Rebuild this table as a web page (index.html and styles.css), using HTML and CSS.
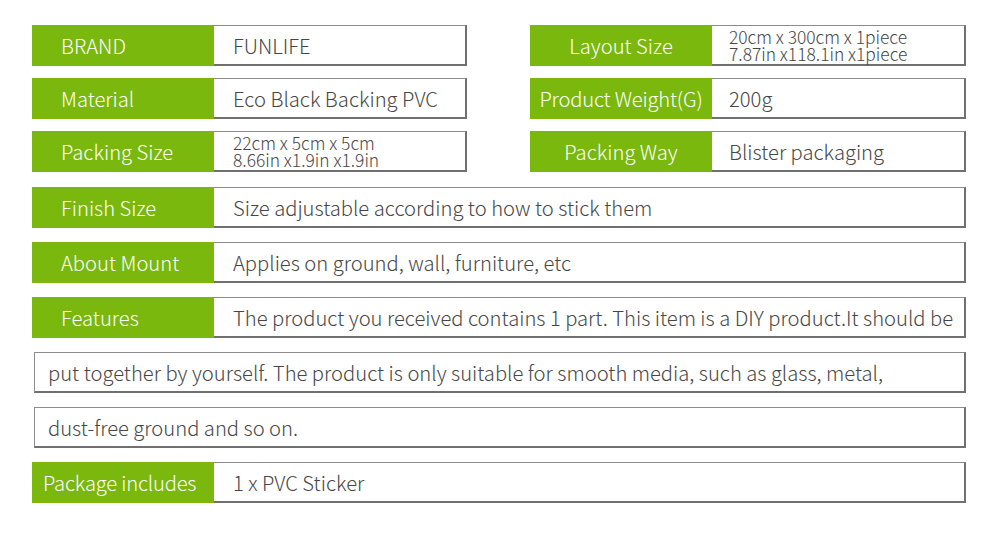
FILE: index.html
```html
<!DOCTYPE html>
<html>
<head>
<meta charset="utf-8">
<link rel="stylesheet" href="styles.css">
</head>
<body>
<div class="sheet">
  <div class="top">
    <div class="pair">
      <div class="row half">
        <div class="label">BRAND</div>
        <div class="value">FUNLIFE</div>
      </div>
      <div class="row half">
        <div class="label center">Layout Size</div>
        <div class="value right small"><span>20cm x 300cm x 1piece</span><span>7.87in x118.1in x1piece</span></div>
      </div>
    </div>
    <div class="pair">
      <div class="row half">
        <div class="label">Material</div>
        <div class="value">Eco Black Backing PVC</div>
      </div>
      <div class="row half">
        <div class="label center tight">Product Weight(G)</div>
        <div class="value right">200g</div>
      </div>
    </div>
    <div class="pair">
      <div class="row half">
        <div class="label">Packing Size</div>
        <div class="value small"><span>22cm x 5cm x 5cm</span><span>8.66in x1.9in x1.9in</span></div>
      </div>
      <div class="row half">
        <div class="label center">Packing Way</div>
        <div class="value right">Blister packaging</div>
      </div>
    </div>
  </div>
  <div class="bottom">
    <div class="row">
      <div class="label">Finish Size</div>
      <div class="value">Size adjustable according to how to stick them</div>
    </div>
    <div class="row">
      <div class="label">About Mount</div>
      <div class="value">Applies on ground, wall, furniture, etc</div>
    </div>
    <div class="row">
      <div class="label">Features</div>
      <div class="value">The product you received contains 1 part. This item is a DIY product.It should be</div>
    </div>
    <div class="row cont">
      <div class="value">put together by yourself. The product is only suitable for smooth media, such as glass, metal,</div>
    </div>
    <div class="row cont">
      <div class="value">dust-free ground and so on.</div>
    </div>
    <div class="row">
      <div class="label pkg">Package includes</div>
      <div class="value">1 x PVC Sticker</div>
    </div>
  </div>
</div>
</body>
</html>
```

FILE: styles.css
```css
html, body {
  margin: 0;
  padding: 0;
  background: #ffffff;
}
body {
  font-family: "Noto Sans CJK SC", "Noto Sans", sans-serif;
  font-weight: 300;
  width: 1000px;
  height: 538px;
  overflow: hidden;
}
.sheet {
  display: flex;
  flex-direction: column;
  gap: 15px;
  padding: 25px 34px 0 32px;
}
.top {
  display: flex;
  flex-direction: column;
  gap: 12px;
}
.bottom {
  display: flex;
  flex-direction: column;
  gap: 14px;
}
.pair {
  display: flex;
  gap: 63px;
}
.row {
  display: flex;
  height: 41px;
}
.row.half {
  flex: 0 0 435px;
}
.row.half + .row.half {
  flex: 0 0 436px;
}
.label {
  flex: 0 0 182px;
  background: #7ab80e;
  color: #ffffff;
  font-size: 20.2px;
  display: flex;
  align-items: center;
  padding-left: 29px;
  box-sizing: border-box;
  white-space: nowrap;
}
.label.center {
  justify-content: center;
  padding-left: 0;
}
.label.tight {
  letter-spacing: -0.2px;
}
.label.pkg {
  padding-left: 11px;
  letter-spacing: -0.2px;
}
.value {
  flex: 1;
  border: 1px solid #8c8c8c;
  border-right: 2px solid #707070;
  border-bottom: 2px solid #707070;
  border-left: none;
  display: flex;
  align-items: center;
  padding-left: 19px;
  color: #464646;
  font-size: 20.2px;
  white-space: nowrap;
  box-sizing: border-box;
}
.value.right {
  padding-left: 17px;
}
.value.small {
  flex-direction: column;
  align-items: flex-start;
  justify-content: center;
  font-size: 17.4px;
  line-height: 17.5px;
}
.row.cont {
  margin-left: 2px;
}
.row.cont .value {
  border-left: 1px solid #8c8c8c;
  padding-left: 13px;
}
```
